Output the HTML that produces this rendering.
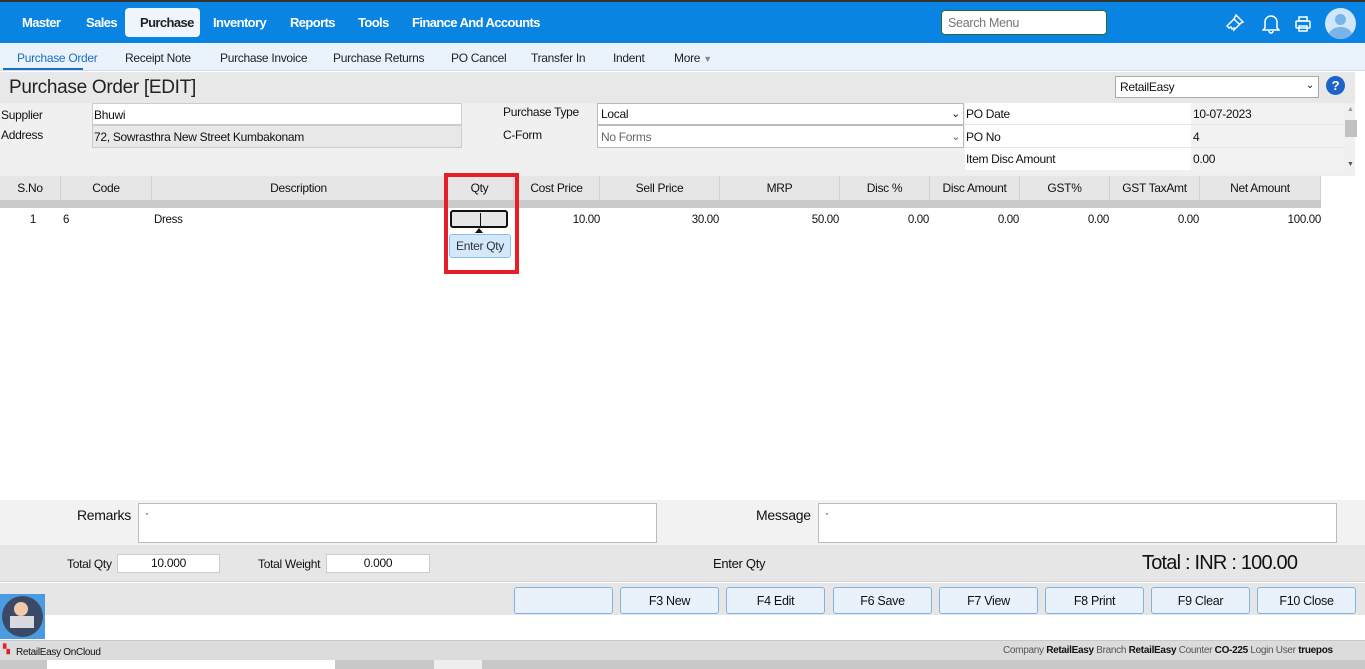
<!DOCTYPE html>
<html><head><style>
*{box-sizing:border-box;margin:0;padding:0}
body{width:1365px;height:669px;overflow:hidden;font-family:"Liberation Sans",sans-serif;font-size:12px;color:#111;background:#fff;position:relative;letter-spacing:-0.3px}
.a{position:absolute}
.top{left:0;top:0;width:1365px;height:43px;background:#0a84e3;border-top:2px solid #333}
.top span{position:absolute;top:13px;color:#fff;font-weight:bold;font-size:13px;letter-spacing:-0.6px}
.sub{left:0;top:43px;width:1365px;height:28px;background:#eaf3fc;border-bottom:1px solid #cfdbe6}
.sub span{position:absolute;top:8px;font-size:12px;color:#222}
.th{top:176px;height:24px;background:#e6e6e6;border-right:1px solid #d0d0d0;text-align:center;line-height:24px;font-size:12px}
.td{top:214px;font-size:11.5px;text-align:right}
.btn{top:587px;width:99px;height:27px;border:1px solid #7fb2e5;border-radius:3px;background:#e9f1fb;text-align:center;line-height:26px;font-size:12.5px}
</style></head><body>
<div class="a top">
<span style="left:22px">Master</span><span style="left:86px">Sales</span>
<div class="a" style="left:125px;top:6px;width:75px;height:29px;background:#eef5fc;border-radius:4px"></div>
<span style="left:140px;color:#222">Purchase</span><span style="left:213px">Inventory</span><span style="left:290px">Reports</span><span style="left:358px">Tools</span><span style="left:412px">Finance And Accounts</span>
<div class="a" style="left:941px;top:8px;width:166px;height:25px;background:#fff;border:1px solid #2a6a3a;border-radius:4px;color:#777;font-size:12.5px;padding:5px 6px">Search Menu</div>
<svg class="a" style="left:1224px;top:10px" width="22" height="22" viewBox="0 0 22 22" fill="none" stroke="#fff" stroke-width="1.5"><path d="M12 3l7 7-4 2-5-5z M10 7l-7 7 2 2 2-1 1 2 2-1 0 2 7-7"/></svg>
<svg class="a" style="left:1262px;top:10px" width="18" height="22" viewBox="0 0 18 22" fill="none" stroke="#fff" stroke-width="1.5"><path d="M3 16V10a6 6 0 0112 0v6l2 2H1z M7 19a2 2 0 004 0"/></svg>
<svg class="a" style="left:1294px;top:13px" width="18" height="18" viewBox="0 0 18 18" fill="none" stroke="#fff" stroke-width="1.5"><rect x="2" y="6" width="14" height="7" rx="1"/><rect x="5" y="2" width="8" height="4"/><rect x="5" y="11" width="8" height="5"/></svg>
<div class="a" style="left:1325px;top:6px;width:31px;height:31px;border-radius:50%;background:#cfe6fb;overflow:hidden"><div class="a" style="left:10px;top:6px;width:11px;height:11px;border-radius:50%;background:#7ab3e8"></div><div class="a" style="left:4px;top:19px;width:23px;height:16px;border-radius:50%;background:#7ab3e8"></div></div>
</div>
<div class="a sub">
<span style="left:17px;color:#1a6fc4">Purchase Order</span><div class="a" style="left:3px;top:25px;width:80px;height:2px;background:#1a6fc4"></div>
<span style="left:125px">Receipt Note</span><span style="left:220px">Purchase Invoice</span><span style="left:333px">Purchase Returns</span><span style="left:451px">PO Cancel</span><span style="left:531px">Transfer In</span><span style="left:613px">Indent</span><span style="left:674px">More <span style="position:static;color:#888;font-size:9px">▼</span></span>
</div>
<div class="a" style="left:0;top:72px;width:1355px;height:104px;background:#f0f0f0"></div>
<div class="a" style="left:0;top:72px;width:1355px;height:31px;background:#e8e8e8"></div>
<div class="a" style="left:9px;top:77px;font-size:19px;color:#222">Purchase Order [EDIT]</div>
<div class="a" style="left:1115px;top:76px;width:204px;height:22px;background:#fff;border:1px solid #aaa;font-size:12px;padding:3px 4px">RetailEasy<span style="float:right;font-size:10px">⌄</span></div>
<div class="a" style="left:1326px;top:76px;width:19px;height:19px;border-radius:50%;background:#1e63c8;color:#fff;font-weight:bold;text-align:center;line-height:19px;font-size:13px">?</div>
<div class="a" style="left:1px;top:108px">Supplier</div><div class="a" style="left:1px;top:128px">Address</div>
<div class="a" style="left:92px;top:103px;width:370px;height:22px;background:#fff;border:1px solid #ccc;padding:4px 1px">Bhuwi</div>
<div class="a" style="left:92px;top:125px;width:370px;height:23px;background:#e8e8e8;border:1px solid #ccc;padding:4px 1px">72, Sowrasthra New Street Kumbakonam</div>
<div class="a" style="left:503px;top:105px">Purchase Type</div><div class="a" style="left:503px;top:128px">C-Form</div>
<div class="a" style="left:597px;top:103px;width:367px;height:22px;background:#fff;border:1px solid #bbb;padding:3px 3px">Local<span style="float:right;font-size:11px">⌄</span></div>
<div class="a" style="left:597px;top:125px;width:367px;height:23px;background:#fff;border:1px solid #bbb;padding:4px 3px;color:#666">No Forms<span style="float:right;font-size:11px">⌄</span></div>
<div class="a" style="left:965px;top:103px;width:378px;height:67px;background:#fff"></div>
<div class="a" style="left:1191px;top:103px;width:152px;height:67px;background:#f2f2f2"></div>
<div class="a" style="left:965px;top:124px;width:378px;height:1px;background:#e6e6e6"></div>
<div class="a" style="left:965px;top:147px;width:378px;height:1px;background:#e6e6e6"></div>
<div class="a" style="left:966px;top:107px">PO Date</div><div class="a" style="left:1193px;top:107px">10-07-2023</div>
<div class="a" style="left:966px;top:130px">PO No</div><div class="a" style="left:1193px;top:130px">4</div>
<div class="a" style="left:966px;top:152px">Item Disc Amount</div><div class="a" style="left:1193px;top:152px">0.00</div>
<div class="a" style="left:1345px;top:120px;width:12px;height:17px;background:#c1c1c1"></div>
<div class="a" style="left:1347px;top:106px;font-size:7px;color:#999">▲</div><div class="a" style="left:1347px;top:161px;font-size:7px;color:#555">▼</div>
<div class="a" style="left:0;top:200px;width:1321px;height:8px;background:#cacaca"></div>
<div class="a th" style="left:0;width:61px">S.No</div><div class="a th" style="left:61px;width:91px">Code</div><div class="a th" style="left:152px;width:294px">Description</div><div class="a th" style="left:446px;width:68px">Qty</div><div class="a th" style="left:514px;width:86px">Cost Price</div><div class="a th" style="left:600px;width:120px">Sell Price</div><div class="a th" style="left:720px;width:120px">MRP</div><div class="a th" style="left:840px;width:90px">Disc %</div><div class="a th" style="left:930px;width:90px">Disc Amount</div><div class="a th" style="left:1020px;width:90px">GST%</div><div class="a th" style="left:1110px;width:90px">GST TaxAmt</div><div class="a th" style="left:1200px;width:121px">Net Amount</div>
<div class="a td" style="left:0;width:36px">1</div><div class="a td" style="left:63px">6</div><div class="a td" style="left:154px">Dress</div>
<div class="a td" style="left:514px;width:86px">10.00</div><div class="a td" style="left:600px;width:119px">30.00</div><div class="a td" style="left:720px;width:119px">50.00</div><div class="a td" style="left:840px;width:89px">0.00</div><div class="a td" style="left:930px;width:89px">0.00</div><div class="a td" style="left:1020px;width:89px">0.00</div><div class="a td" style="left:1110px;width:89px">0.00</div><div class="a td" style="left:1200px;width:121px">100.00</div>
<div class="a" style="left:450px;top:210px;width:58px;height:18px;background:#e6e6e6;border:2px solid #111;border-radius:3px"><div class="a" style="left:28px;top:1px;width:1px;height:13px;background:#111"></div></div>
<div class="a" style="left:475px;top:228px;width:0;height:0;border-left:4px solid transparent;border-right:4px solid transparent;border-bottom:5px solid #111"></div>
<div class="a" style="left:449px;top:234px;width:62px;height:24px;background:#d4e7fb;border:1px solid #8cc0f0;border-radius:3px;text-align:center;line-height:23px;color:#333">Enter Qty</div>
<div class="a" style="left:444px;top:173px;width:75px;height:101px;border:4px solid #e61e25"></div>
<div class="a" style="left:0;top:500px;width:1365px;height:45px;background:#f2f2f2"></div>
<div class="a" style="left:77px;top:507px;font-size:14px">Remarks</div>
<div class="a" style="left:138px;top:503px;width:519px;height:40px;background:#fff;border:1px solid #bbb;padding:2px 6px">·</div>
<div class="a" style="left:756px;top:507px;font-size:14px">Message</div>
<div class="a" style="left:818px;top:503px;width:519px;height:40px;background:#fff;border:1px solid #bbb;padding:2px 6px">·</div>
<div class="a" style="left:0;top:545px;width:1365px;height:37px;background:#e6e6e6;border-bottom:1px solid #d4d4d4"></div>
<div class="a" style="left:67px;top:557px">Total Qty</div>
<div class="a" style="left:117px;top:554px;width:103px;height:19px;background:#fff;border:1px solid #ccc;text-align:center;line-height:17px">10.000</div>
<div class="a" style="left:258px;top:557px">Total Weight</div>
<div class="a" style="left:326px;top:554px;width:104px;height:19px;background:#fff;border:1px solid #ccc;text-align:center;line-height:17px">0.000</div>
<div class="a" style="left:713px;top:556px;font-size:13px">Enter Qty</div>
<div class="a" style="left:1142px;top:552px;font-size:20px;letter-spacing:-0.8px">Total : INR : 100.00</div>
<div class="a" style="left:0;top:583px;width:1365px;height:32px;background:#e6e6e6"></div>
<div class="a btn" style="left:514px"></div><div class="a btn" style="left:620px">F3 New</div><div class="a btn" style="left:726px">F4 Edit</div><div class="a btn" style="left:833px">F6 Save</div><div class="a btn" style="left:939px">F7 View</div><div class="a btn" style="left:1045px">F8 Print</div><div class="a btn" style="left:1151px">F9 Clear</div><div class="a btn" style="left:1257px">F10 Close</div>
<div class="a" style="left:0;top:594px;width:45px;height:45px;background:#4a9be0"><div class="a" style="left:2px;top:2px;width:41px;height:41px;border-radius:50%;background:#3a4a66"></div><div class="a" style="left:10px;top:22px;width:24px;height:12px;background:#d9d9e0"></div><div class="a" style="left:14px;top:8px;width:14px;height:14px;border-radius:50%;background:#f1c8a8"></div></div>
<div class="a" style="left:0;top:640px;width:1365px;height:20px;background:#dcdcdc;border-top:1px solid #c8c8c8"></div>
<div class="a" style="left:3px;top:644px;font-size:9px;color:#d22">▚</div>
<div class="a" style="left:16px;top:647px;font-size:10px">RetailEasy OnCloud</div>
<div class="a" style="left:1003px;top:645px;font-size:10px;color:#555">Company <b style="color:#111">RetailEasy</b> Branch <b style="color:#111">RetailEasy</b> Counter <b style="color:#111">CO-225</b> Login User <b style="color:#111">truepos</b></div>
<div class="a" style="left:0;top:660px;width:1365px;height:9px;background:#c8c8c8"></div>
<div class="a" style="left:47px;top:660px;width:288px;height:9px;background:#fff"></div>
<div class="a" style="left:434px;top:660px;width:48px;height:9px;background:#eee"></div>
</body></html>
